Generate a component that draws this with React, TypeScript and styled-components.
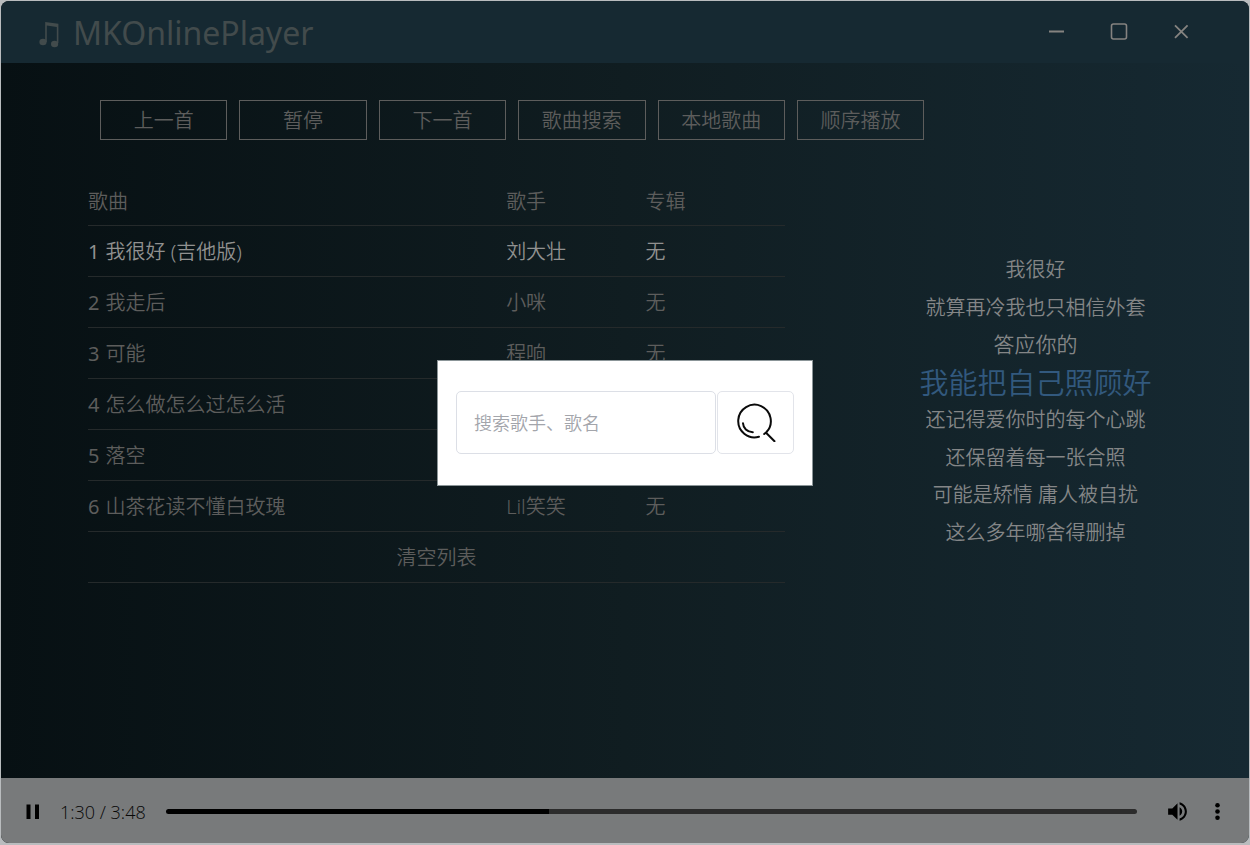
import React, { useState } from "react";
import styled, { createGlobalStyle, css } from "styled-components";

const GlobalStyle = createGlobalStyle`
  *, *::before, *::after { box-sizing: border-box; }
  html, body, #root { height: 100%; }
  body {
    margin: 0;
    background: #b9bcbe;
    font-family: "Noto Sans", "Noto Sans CJK SC", sans-serif;
    font-size: 20px;
    color: #5d5d5c;
  }
  button, input { font: inherit; color: inherit; }
`;

const Desktop = styled.div`
  min-height: 100%;
  display: flex;
  padding: 1px 1px 2px;
`;

const AppWindow = styled.div`
  flex: 1;
  display: flex;
  flex-direction: column;
  border-radius: 8px;
  overflow: hidden;
  background: linear-gradient(to right, #071013, #101d21, #162932);
`;

const TitleBar = styled.header`
  display: flex;
  align-items: center;
  justify-content: space-between;
  height: 62px;
  padding: 0 37px 0 36px;
  background: #162932;
`;

const Brand = styled.h1`
  display: flex;
  align-items: center;
  gap: 12px;
  margin: 0;
  padding-top: 2px;
  font-size: 32px;
  line-height: 40px;
  font-weight: 400;
  color: #424b4c;
`;

const WindowControls = styled.div`
  display: flex;
`;

const BareButton = styled.button`
  display: flex;
  align-items: center;
  justify-content: center;
  padding: 0;
  border: 0;
  background: none;
  cursor: pointer;
`;

const WindowButton = styled(BareButton)`
  width: 62px;
  height: 62px;
  color: #858380;
`;

const Main = styled.main`
  flex: 1;
  padding: 37px 0 36px 87px;
`;

const Toolbar = styled.div`
  display: grid;
  grid-template-columns: repeat(6, 1fr);
  gap: 12px;
  width: 71%;
  margin-left: 12px;
`;

const ToolButton = styled.button`
  height: 40px;
  padding: 2px 0 0;
  border: 1px solid #5d5d5c;
  background: none;
  font-weight: 350;
  line-height: 24px;
  white-space: nowrap;
  cursor: pointer;
`;

const Columns = styled.div`
  display: grid;
  grid-template-columns: 31fr 19fr;
  gap: 37px;
  margin-top: 34px;
`;

const SongTable = styled.table`
  width: 100%;
  table-layout: fixed;
  border-collapse: collapse;
  align-self: start;
  font-weight: 350;
`;

const Heading = styled.th<{ $width: string }>`
  width: ${(p) => p.$width};
  height: 51px;
  padding: 3px 0 0;
  border-bottom: 1px solid #252a2b;
  font-weight: inherit;
  text-align: left;
`;

const Row = styled.tr<{ $active?: boolean }>`
  ${(p) => p.$active && css`color: #919190;`}
`;

const Cell = styled.td`
  height: 51px;
  padding: 3px 0 0;
  border-bottom: 1px solid #252a2b;
  line-height: 30px;
`;

const Index = styled.span`
  margin-right: 6px;
  font-weight: 400;
`;

const ClearButton = styled(BareButton)`
  width: 100%;
  height: 46px;
`;

const Lyrics = styled.div`
  display: grid;
  grid-template-rows: repeat(8, 1fr);
  height: 300px;
  margin-top: 77px;
  text-align: center;
  color: #848687;
  font-weight: 350;
`;

const LyricLine = styled.p<{ $state?: "active" | "leaving" }>`
  margin: 0;
  line-height: 37px;
  white-space: nowrap;
  ${(p) => p.$state === "leaving" && css`font-size: 21px;`}
  ${(p) =>
    p.$state === "active" &&
    css`
      font-size: 29px;
      color: #32597e;
    `}
`;

const PlayerBar = styled.footer`
  display: flex;
  align-items: center;
  height: 65px;
  padding: 2px 12px 0;
  background: #787a7b;
  color: #000;
`;

const IconButton = styled(BareButton)`
  width: 40px;
  height: 40px;
`;

const Time = styled.span`
  margin: 0 20px 0 7px;
  font-family: "Open Sans", sans-serif;
  font-size: 18px;
  font-weight: 300;
  color: #080808;
  white-space: nowrap;
`;

const Seek = styled.input<{ $played: number }>`
  flex: 1;
  min-width: 0;
  height: 5px;
  margin: 0 20px 0 0;
  border-radius: 3px;
  appearance: none;
  background: linear-gradient(
    to right,
    #000 ${(p) => p.$played}%,
    #2c2c2c ${(p) => p.$played}%
  );
  cursor: pointer;
  &::-webkit-slider-thumb {
    appearance: none;
    width: 1px;
    height: 5px;
    background: transparent;
  }
`;

const Overlay = styled.div`
  position: fixed;
  inset: 0;
  display: grid;
  place-items: center;
`;

const SearchDialog = styled.form`
  display: flex;
  gap: 1px;
  width: 30%;
  min-width: 376px;
  padding: 30px 18px 31px;
  border: 1px solid #8b9598;
  background: #fff;
`;

const SearchInput = styled.input`
  flex: 1;
  min-width: 0;
  height: 63px;
  padding: 1px 17px 0;
  border: 1px solid #dcdfe6;
  border-radius: 5px;
  outline: 0;
  background: #fff;
  font-size: 18px;
  font-weight: 350;
  color: #333;
  &::placeholder { color: #a3a5ab; opacity: 1; }
`;

const SearchButton = styled(BareButton)`
  width: 77px;
  height: 63px;
  border: 1px solid #e2e4ea;
  border-radius: 5px;
  color: #0a0a0a;
`;

const actions = ["上一首", "暂停", "下一首", "歌曲搜索", "本地歌曲", "顺序播放"];

const songs = [
  { title: "我很好 (吉他版)", artist: "刘大壮", album: "无" },
  { title: "我走后", artist: "小咪", album: "无" },
  { title: "可能", artist: "程响", album: "无" },
  { title: "怎么做怎么过怎么活", artist: "兰小兮", album: "无" },
  { title: "落空", artist: "印子月", album: "无" },
  { title: "山茶花读不懂白玫瑰", artist: "Lil笑笑", album: "无" },
];

const lyrics: { text: string; state?: "active" | "leaving" }[] = [
  { text: "我很好" },
  { text: "就算再冷我也只相信外套" },
  { text: "答应你的", state: "leaving" },
  { text: "我能把自己照顾好", state: "active" },
  { text: "还记得爱你时的每个心跳" },
  { text: "还保留着每一张合照" },
  { text: "可能是矫情 庸人被自扰" },
  { text: "这么多年哪舍得删掉" },
];

const NoteIcon = () => (
  <svg width="24" height="32" viewBox="0 0 24 32" fill="currentColor" aria-hidden="true">
    <path d="M8.200 5 21.400 6.800V26h-1.600V10L9.800 8.600V25H8.200z" />
    <ellipse cx="6" cy="25" rx="3.600" ry="3.200" />
    <ellipse cx="17.600" cy="27" rx="3.600" ry="3.200" />
  </svg>
);

const MinimizeIcon = () => (
  <svg width="20" height="20" viewBox="0 0 20 20" stroke="currentColor" strokeWidth="1.8" aria-hidden="true">
    <path d="M2 9.500h15" />
  </svg>
);

const MaximizeIcon = () => (
  <svg width="20" height="20" viewBox="0 0 20 20" fill="none" stroke="currentColor" strokeWidth="1.6" aria-hidden="true">
    <rect x="2.500" y="2" width="15" height="15" rx="2" />
  </svg>
);

const CloseIcon = () => (
  <svg width="20" height="20" viewBox="0 0 20 20" stroke="currentColor" strokeWidth="1.800" aria-hidden="true">
    <path d="m4 3.400 12.600 12.400M16.600 3.400 4 15.800" />
  </svg>
);

const PauseIcon = () => (
  <svg width="16" height="16" viewBox="0 0 16 16" fill="currentColor" aria-hidden="true">
    <path d="M1.500 .500h4v14.500h-4zM10 .500h4v14.500h-4z" />
  </svg>
);

const VolumeIcon = () => (
  <svg width="25" height="25" viewBox="0 0 24 24" fill="currentColor" aria-hidden="true">
    <path d="M3 9v6h4l5 5V4L7 9H3zm13.500 3c0-1.770-1.020-3.290-2.500-4.030v8.050c1.480-.730 2.500-2.250 2.500-4.020zM14 3.230v2.060c2.890.860 5 3.540 5 6.710s-2.110 5.850-5 6.710v2.060c4.010-.910 7-4.490 7-8.770s-2.990-7.860-7-8.770z" />
  </svg>
);

const MoreIcon = () => (
  <svg width="25" height="25" viewBox="0 0 24 24" fill="currentColor" aria-hidden="true">
    <circle cx="12" cy="6" r="2.200" />
    <circle cx="12" cy="12" r="2.200" />
    <circle cx="12" cy="18" r="2.200" />
  </svg>
);

const SearchIcon = () => (
  <svg width="40" height="40" viewBox="0 0 40 40" fill="none" stroke="currentColor" strokeWidth="2" strokeLinecap="round" aria-hidden="true">
    <path d="M23 34.700A16.300 16.300 0 1 1 30.300 30.300L28.200 32" />
    <path d="M30.300 31 38.500 39.200" />
    <path d="M7 21.200c.300 5 4 9 9.800 9" />
  </svg>
);

export default function App() {
  const [position, setPosition] = useState(90);
  const [query, setQuery] = useState("");

  return (
    <>
      <GlobalStyle />
      <Desktop>
        <AppWindow>
          <TitleBar>
            <Brand>
              <NoteIcon />
              MKOnlinePlayer
            </Brand>
            <WindowControls>
              <WindowButton type="button" aria-label="最小化"><MinimizeIcon /></WindowButton>
              <WindowButton type="button" aria-label="最大化"><MaximizeIcon /></WindowButton>
              <WindowButton type="button" aria-label="关闭"><CloseIcon /></WindowButton>
            </WindowControls>
          </TitleBar>

          <Main>
            <Toolbar>
              {actions.map((label) => (
                <ToolButton key={label} type="button">{label}</ToolButton>
              ))}
            </Toolbar>
            <Columns>
              <SongTable>
                <thead>
                  <tr>
                    <Heading $width="60%">歌曲</Heading>
                    <Heading $width="20%">歌手</Heading>
                    <Heading $width="20%">专辑</Heading>
                  </tr>
                </thead>
                <tbody>
                  {songs.map((song, i) => (
                    <Row key={song.title} $active={i === 0}>
                      <Cell>
                        <Index>{i + 1}</Index>
                        {song.title}
                      </Cell>
                      <Cell>{song.artist}</Cell>
                      <Cell>{song.album}</Cell>
                    </Row>
                  ))}
                  <Row>
                    <Cell colSpan={3}>
                      <ClearButton type="button">清空列表</ClearButton>
                    </Cell>
                  </Row>
                </tbody>
              </SongTable>
              <Lyrics>
                {lyrics.map((line) => (
                  <LyricLine key={line.text} $state={line.state}>{line.text}</LyricLine>
                ))}
              </Lyrics>
            </Columns>
          </Main>

          <PlayerBar>
            <IconButton type="button" aria-label="暂停播放"><PauseIcon /></IconButton>
            <Time>1:30 / 3:48</Time>
            <Seek
              type="range"
              aria-label="播放进度"
              min={0}
              max={228}
              value={position}
              $played={(position / 228) * 100}
              onChange={(e) => setPosition(Number(e.target.value))}
            />
            <IconButton type="button" aria-label="音量"><VolumeIcon /></IconButton>
            <IconButton type="button" aria-label="更多"><MoreIcon /></IconButton>
          </PlayerBar>
        </AppWindow>
      </Desktop>

      <Overlay>
        <SearchDialog onSubmit={(e) => e.preventDefault()}>
          <SearchInput
            type="text"
            aria-label="搜索歌手、歌名"
            placeholder="搜索歌手、歌名"
            value={query}
            onChange={(e) => setQuery(e.target.value)}
          />
          <SearchButton type="submit" aria-label="搜索"><SearchIcon /></SearchButton>
        </SearchDialog>
      </Overlay>
    </>
  );
}
